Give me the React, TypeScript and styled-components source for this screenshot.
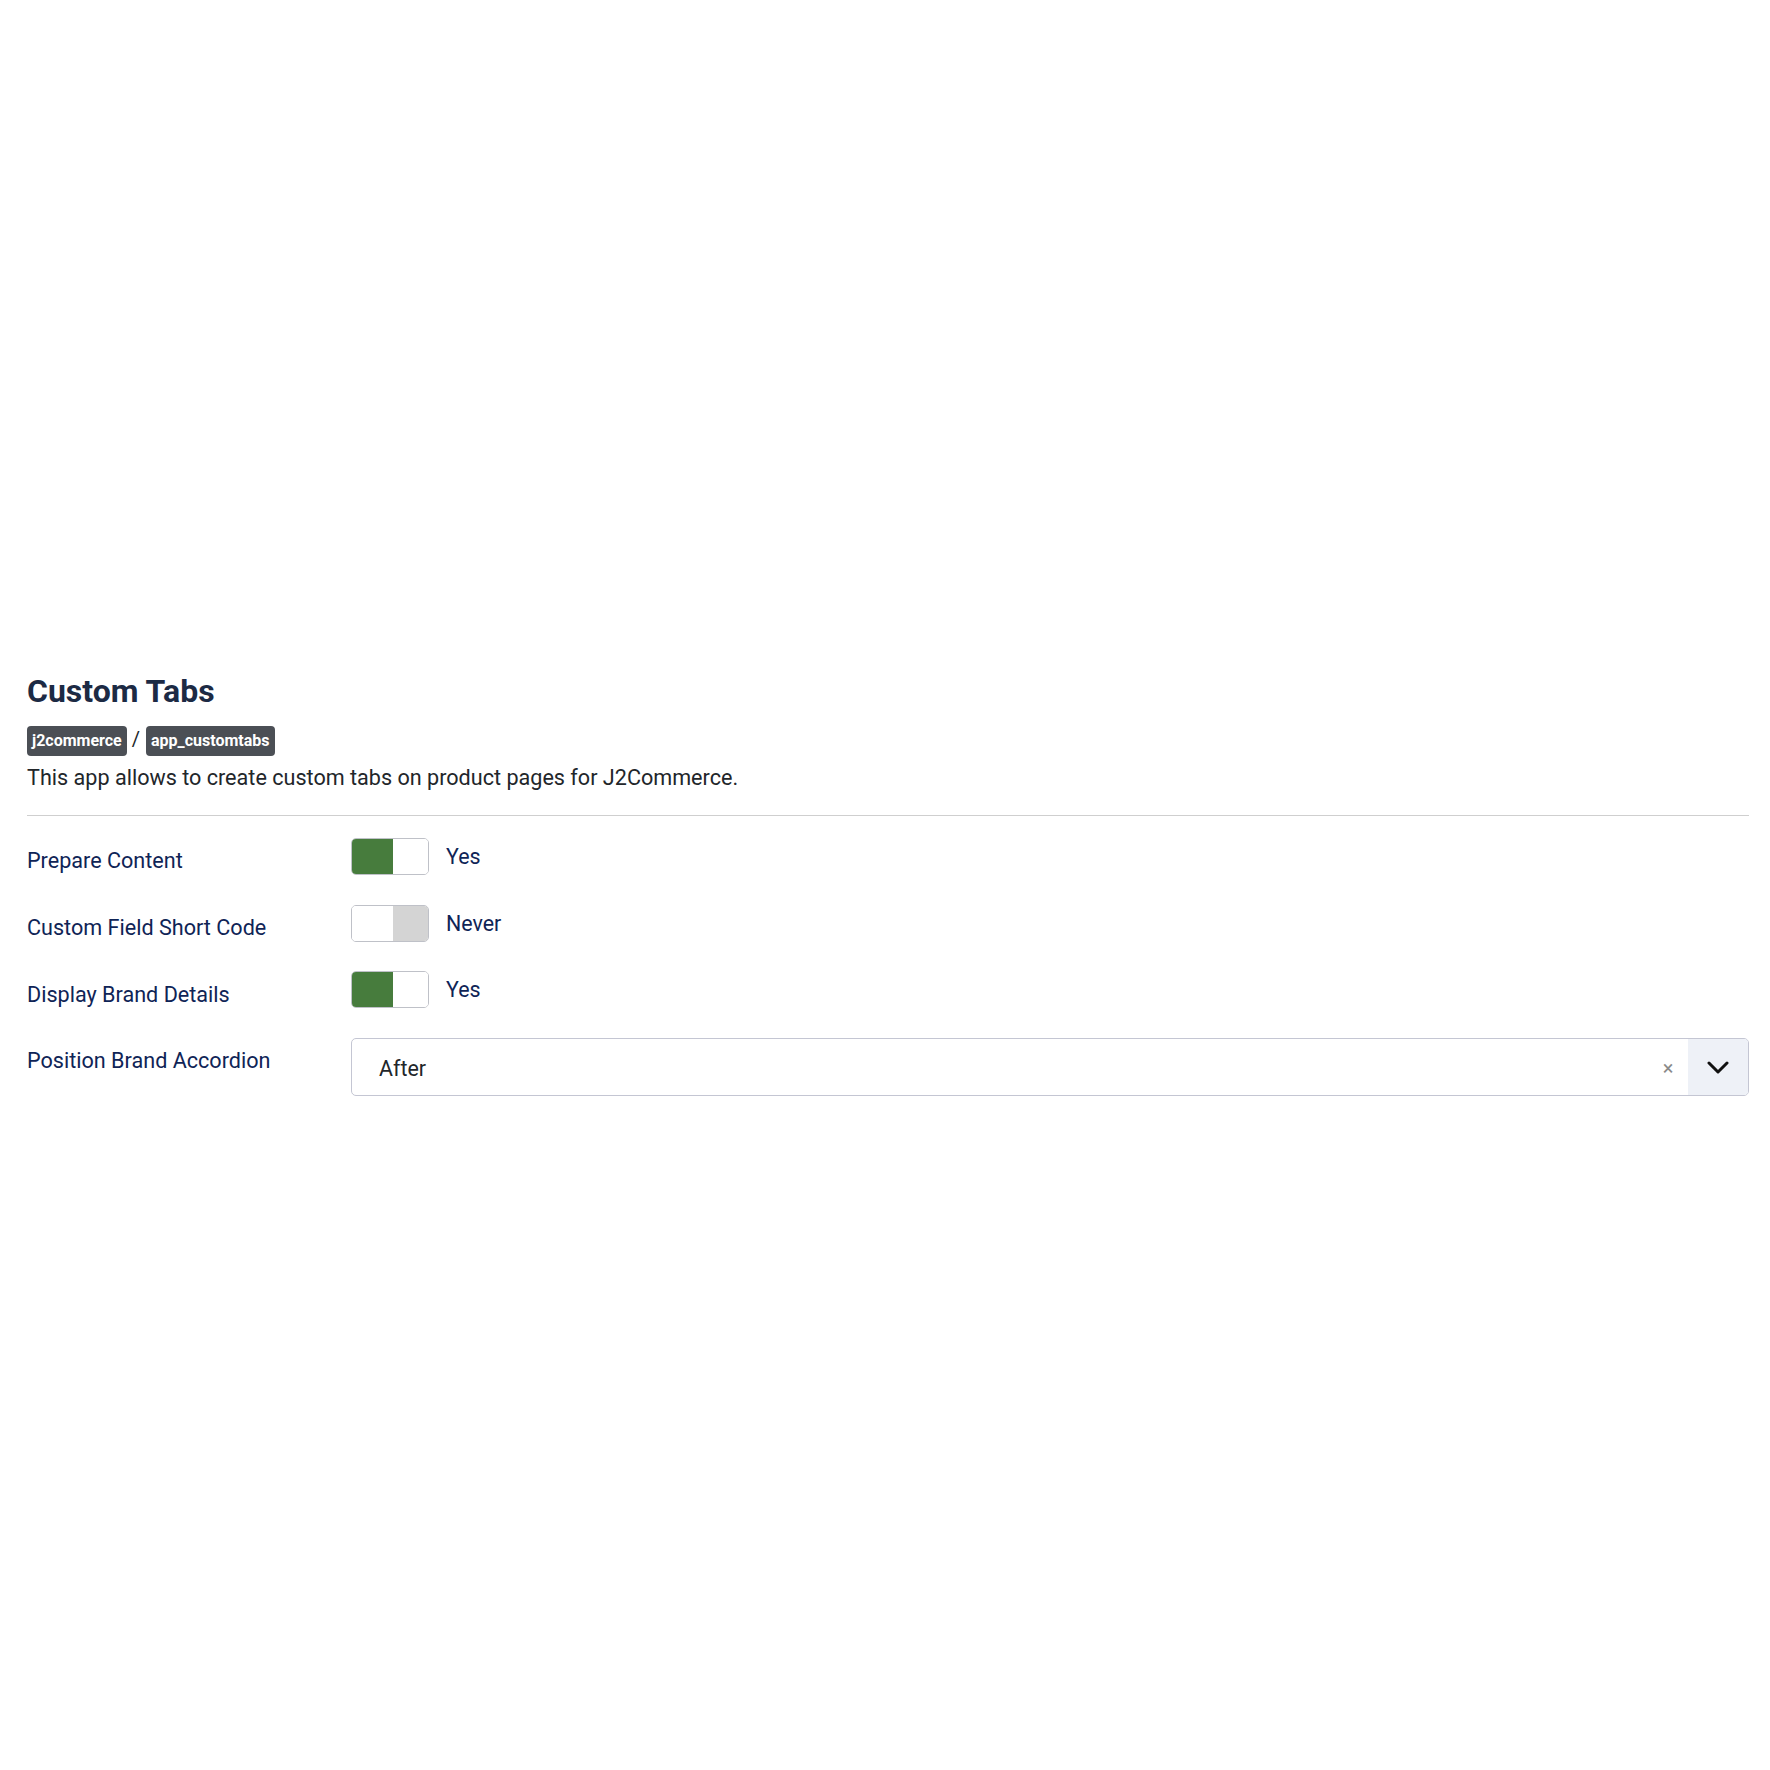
import React from "react";
import styled, { createGlobalStyle } from "styled-components";

const GlobalStyle = createGlobalStyle`
  html, body {
    margin: 0;
    padding: 0;
    background: #ffffff;
  }
  body {
    font-family: Roboto, "Liberation Sans", Arial, sans-serif;
    color: #22262a;
  }
  * { box-sizing: border-box; }
`;

const Page = styled.main`
  padding: 672px 21px 120px 27px;
`;

const Header = styled.header`
  display: flex;
  flex-direction: column;
`;

const Title = styled.h1`
  margin: 0;
  font-size: 32px;
  line-height: 38.4px;
  font-weight: 700;
  color: #1c2a44;
`;

const Crumbs = styled.div`
  display: flex;
  align-items: center;
  margin-top: 15.6px;
  height: 30px;
`;

const Badge = styled.span`
  display: inline-flex;
  align-items: center;
  height: 30px;
  padding: 0 5px;
  border-radius: 4px;
  background: #4b4f55;
  color: #ffffff;
  font-size: 16px;
  font-weight: 700;
  line-height: 1;
`;

const Slash = styled.span`
  margin: 0 6px 4px 5px;
  font-size: 20px;
  color: #22262a;
`;

const Description = styled.p`
  margin: 6px 0 0;
  font-size: 21.6px;
  line-height: 31.5px;
  color: #22262a;
`;

const Divider = styled.hr`
  margin: 21.5px 0 22px;
  border: 0;
  border-top: 1px solid #cfcfcf;
`;

const Form = styled.div`
  display: flex;
  flex-direction: column;
  gap: 29.7px;
`;

const Row = styled.div`
  display: grid;
  grid-template-columns: 324px 1fr;
  align-items: start;
`;

const Label = styled.label`
  padding-top: 10.25px;
  font-size: 21.6px;
  line-height: 26.75px;
  color: #0f2456;
`;

const SwitchWrap = styled.div`
  display: flex;
  align-items: flex-start;
`;

const Track = styled.span`
  display: flex;
  width: 78px;
  height: 37px;
  border: 1px solid #bfc1c8;
  border-radius: 5px;
  overflow: hidden;
`;

const Half = styled.span<{ $fill: string; $w: number }>`
  width: ${(p) => p.$w}px;
  height: 100%;
  background: ${(p) => p.$fill};
`;

const SwitchText = styled.span`
  margin-left: 17px;
  padding-top: 3px;
  font-size: 21.4px;
  line-height: 31px;
  color: #0f2456;
`;

const Select = styled.div`
  display: flex;
  align-items: stretch;
  height: 58px;
  border: 1px solid #c4c6d3;
  border-radius: 5px;
  overflow: hidden;
`;

const SelectValue = styled.span`
  flex: 1;
  display: flex;
  align-items: center;
  padding: 2px 0 0 27px;
  font-size: 21.4px;
  color: #22262a;
`;

const Clear = styled.span`
  display: flex;
  align-items: center;
  justify-content: center;
  width: 40px;
  padding-top: 2px;
  font-size: 20px;
  color: #8a8a8a;
`;

const Caret = styled.span`
  display: flex;
  align-items: center;
  justify-content: center;
  width: 60px;
  background: #eef1f7;
`;

type SwitchProps = { on: boolean; text: string };

const Switch = ({ on, text }: SwitchProps) => (
  <SwitchWrap>
    <Track>
      <Half $w={41} $fill={on ? "#477c3d" : "#ffffff"} />
      <Half $w={35} $fill={on ? "#ffffff" : "#d4d4d4"} />
    </Track>
    <SwitchText>{text}</SwitchText>
  </SwitchWrap>
);

const ChevronDown = () => (
  <svg width="22" height="13" viewBox="0 0 22 13" fill="none">
    <path d="M2 2l9 9 9-9" stroke="#111" strokeWidth="3" strokeLinecap="round" strokeLinejoin="round" />
  </svg>
);

const fields: { label: string; on: boolean; text: string }[] = [
  { label: "Prepare Content", on: true, text: "Yes" },
  { label: "Custom Field Short Code", on: false, text: "Never" },
  { label: "Display Brand Details", on: true, text: "Yes" },
];

export default function App() {
  return (
    <>
      <GlobalStyle />
      <Page>
        <Header>
          <Title>Custom Tabs</Title>
          <Crumbs>
            <Badge>j2commerce</Badge>
            <Slash>/</Slash>
            <Badge>app_customtabs</Badge>
          </Crumbs>
          <Description>
            This app allows to create custom tabs on product pages for J2Commerce.
          </Description>
        </Header>
        <Divider />
        <Form>
          {fields.map((f) => (
            <Row key={f.label}>
              <Label>{f.label}</Label>
              <Switch on={f.on} text={f.text} />
            </Row>
          ))}
          <Row>
            <Label>Position Brand Accordion</Label>
            <Select>
              <SelectValue>After</SelectValue>
              <Clear>×</Clear>
              <Caret>
                <ChevronDown />
              </Caret>
            </Select>
          </Row>
        </Form>
      </Page>
    </>
  );
}
